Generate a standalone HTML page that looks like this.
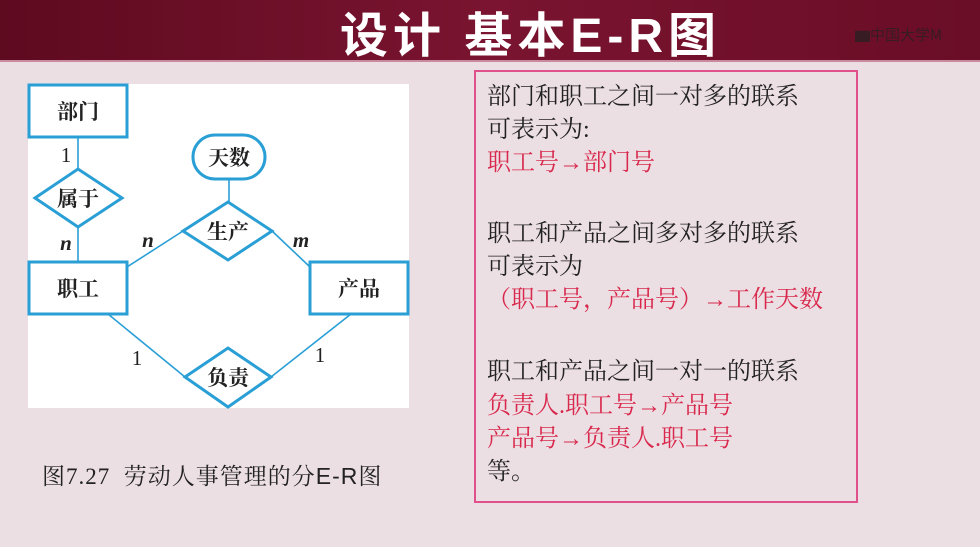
<!DOCTYPE html>
<html><head><meta charset="utf-8"><style>
*{margin:0;padding:0}
body{width:980px;height:547px;overflow:hidden;background:#ecdfe4;position:relative;font-family:"Liberation Serif","Noto Serif CJK SC",serif}
.hdr{position:absolute;left:0;top:0;width:980px;height:60px;background:linear-gradient(90deg,#5e0a1f,#7a1430 50%,#6a0d26);border-bottom:2px solid #c98aa0}
.title{position:absolute;left:340px;top:-4px;color:#fff;font:bold 48px "Liberation Sans","Noto Sans CJK SC",sans-serif;letter-spacing:5px;white-space:nowrap}
.logo{position:absolute;left:855px;top:24px;color:#222;font:15px "Noto Sans CJK SC",sans-serif;opacity:.7}
.panel{position:absolute;left:474px;top:70px;width:380px;height:429px;border:2px solid #e0508a}
.t{position:absolute;left:487px;font-size:24px;color:#222;white-space:nowrap;line-height:30px}
.r{color:#d8284c}
.cap{position:absolute;left:42px;top:458px;font-size:23px;color:#222;white-space:nowrap;letter-spacing:1px}
.cap b{font-family:"Liberation Sans",sans-serif;font-weight:normal}
</style></head><body>
<div class="hdr"></div>
<div class="title">设计 基本E-R图</div>
<div class="logo">▆中国大学M</div>
<svg style="position:absolute;left:0;top:0" width="980" height="547">
<rect x="28" y="84" width="381" height="324" fill="#fff"/>
<g stroke="#2a9fd6" fill="none" stroke-width="1.6">
<line x1="78" y1="137" x2="78" y2="169"/><line x1="78" y1="227" x2="78" y2="262"/>
<line x1="229" y1="179" x2="229" y2="202"/>
<line x1="127" y1="267" x2="183" y2="231"/><line x1="272" y1="231" x2="310" y2="267"/>
<line x1="108" y1="314" x2="185" y2="377"/><line x1="351" y1="314" x2="271" y2="377"/>
</g>
<g stroke="#2a9fd6" fill="#fff" stroke-width="3">
<rect x="29" y="85" width="98" height="52"/>
<rect x="29" y="262" width="98" height="52"/>
<rect x="310" y="262" width="98" height="52"/>
<rect x="193" y="135" width="72" height="44" rx="22"/>
<polygon points="35,198 78,169 122,198 78,227"/>
<polygon points="183,231 228,202 272,231 228,260"/>
<polygon points="185,377 228,348 271,377 228,407"/>
</g>
<g font-family="Liberation Serif,Noto Serif CJK SC,serif" font-size="21" font-weight="bold" fill="#222" text-anchor="middle">
<text x="78" y="119">部门</text><text x="78" y="206">属于</text><text x="78" y="296">职工</text>
<text x="229" y="165">天数</text><text x="228" y="239">生产</text><text x="359" y="296">产品</text><text x="228" y="385">负责</text>
</g>
<g font-family="Liberation Serif,serif" font-size="21" fill="#222" text-anchor="middle">
<text x="66" y="162">1</text><text x="137" y="365">1</text><text x="320" y="362">1</text>
<text x="66" y="250" font-style="italic" font-weight="bold">n</text>
<text x="148" y="247" font-style="italic" font-weight="bold">n</text>
<text x="301" y="247" font-style="italic" font-weight="bold">m</text>
</g>
</svg>
<div class="cap">图7.27&nbsp; 劳动人事管理的分<b>E-R</b>图</div>
<div class="panel"></div>
<div class="t" style="top:82px">部门和职工之间一对多的联系</div>
<div class="t" style="top:115px">可表示为:</div>
<div class="t r" style="top:148px">职工号→部门号</div>
<div class="t" style="top:219px">职工和产品之间多对多的联系</div>
<div class="t" style="top:252px">可表示为</div>
<div class="t r" style="top:285px">（职工号，产品号）→工作天数</div>
<div class="t" style="top:357px">职工和产品之间一对一的联系</div>
<div class="t r" style="top:391px">负责人.职工号→产品号</div>
<div class="t r" style="top:424px">产品号→负责人.职工号</div>
<div class="t" style="top:457px">等。</div>
</body></html>
